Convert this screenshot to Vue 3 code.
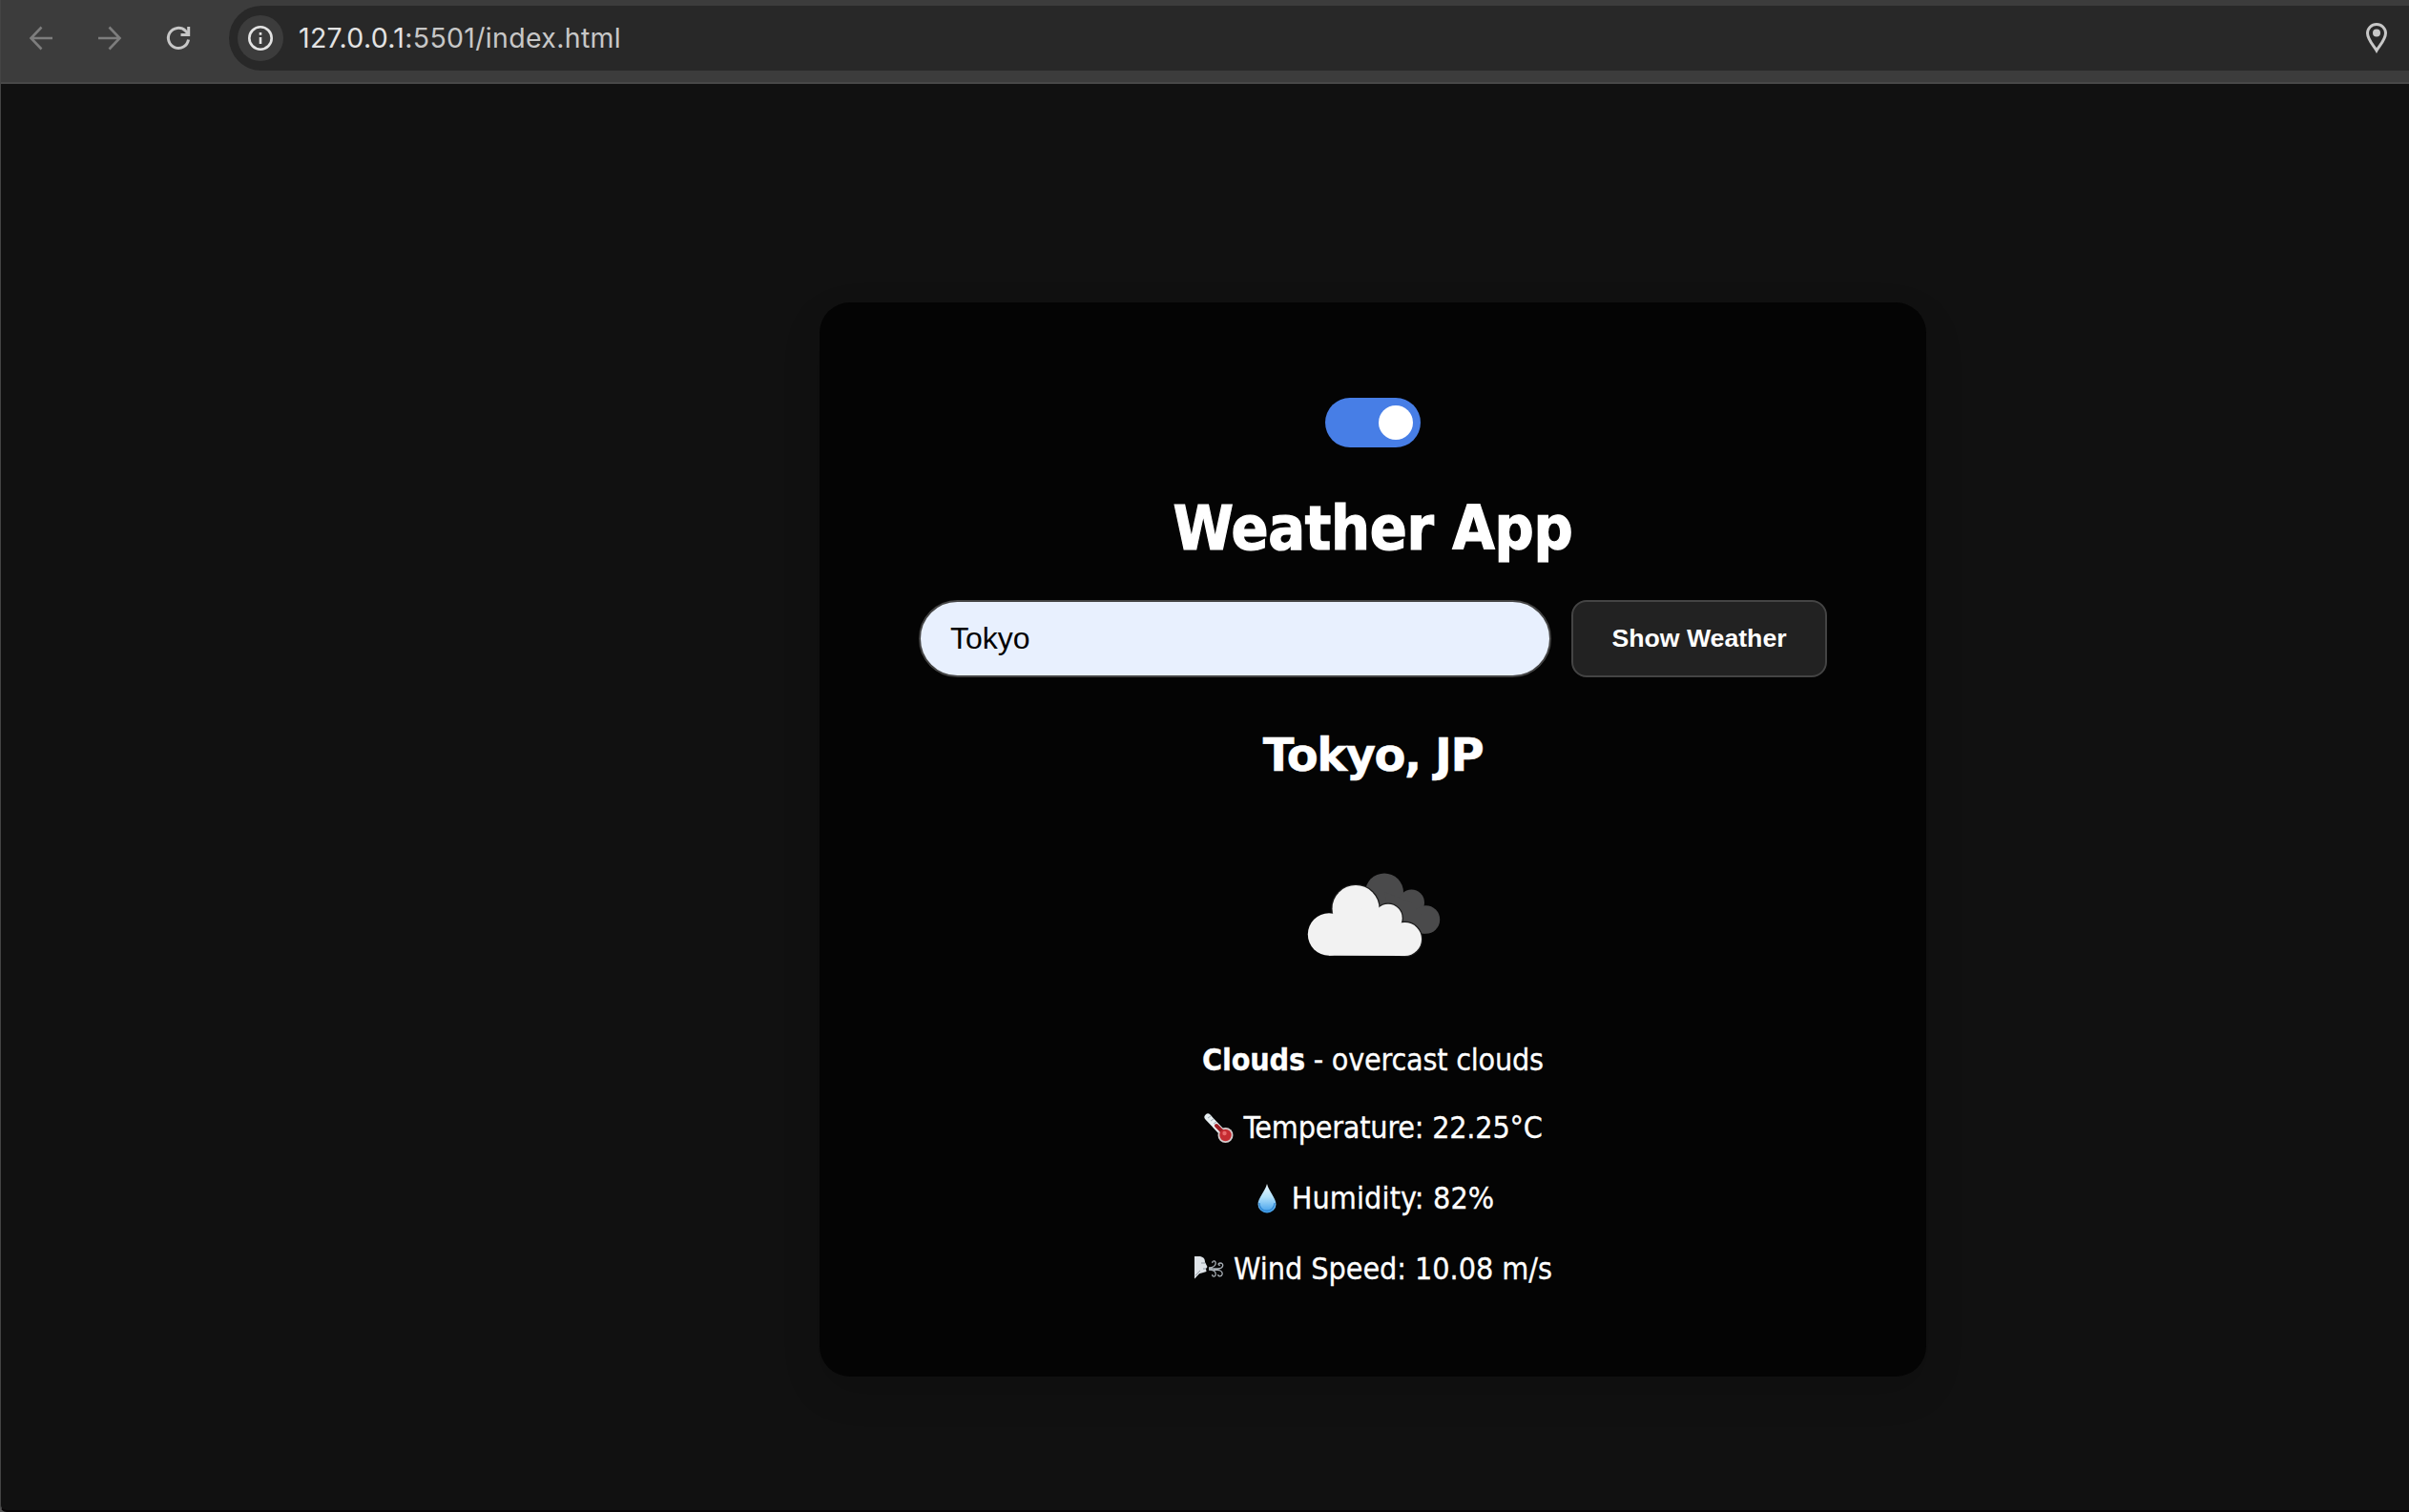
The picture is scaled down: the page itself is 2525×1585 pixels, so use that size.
<script setup>
import { ref } from 'vue'

const city = ref('Tokyo')
const dark = ref(true)
</script>

<template>
  <div class="window">
    <header class="toolbar">
      <svg class="nav dim" viewBox="0 0 32 40"><path d="M27 20H4.500M15.500 8.500L4.500 20l11 11.500" /></svg>
      <svg class="nav dim" viewBox="0 0 32 40"><path d="M3 20h22.500M14.500 8.500l11 11.500-11 11.500" /></svg>
      <svg class="nav reload" viewBox="0 0 32 40"><path d="M25.500 21.500A10.600 10.600 0 1 1 22.300 12.200L25.500 15.500" /><path d="M25.700 8V16.500H17.500" /></svg>
      <div class="omnibox">
        <span class="site-info">
          <svg viewBox="0 0 28 28"><circle cx="14" cy="14" r="11.7" /><path d="M14 13v7M14 8v2.8" /></svg>
        </span>
        <span class="url"><b>127.0.0.1</b>:5501/index.html</span>
        <svg class="pin" viewBox="0 0 24 34"><path d="M12 30C9 25 2.5 18.500 2.500 11.800A9.500 9.300 0 0 1 21.500 11.800C21.500 18.500 15 25 12 30Z" /><circle cx="12" cy="11.500" r="4" /></svg>
      </div>
    </header>
    <main class="page">
      <section class="card">
        <button class="switch" :class="{ on: dark }" @click="dark = !dark"><i></i></button>
        <h1><span>Weather App</span></h1>
        <form class="search" @submit.prevent>
          <input v-model="city" type="text" />
          <button>Show Weather</button>
        </form>
        <h2><span>Tokyo, JP</span></h2>
        <svg class="clouds" viewBox="20 14 140 90">
          <g class="back">
            <circle cx="101" cy="35.500" r="20" /><circle cx="129.500" cy="46" r="13.500" /><circle cx="144.500" cy="64" r="14.700" />
            <path d="M101 35L129 46 144 64V78.500H110Z" />
          </g>
          <g class="outline">
            <circle cx="71" cy="52.500" r="24.500" /><circle cx="105" cy="62.500" r="14.700" /><circle cx="122.500" cy="84.500" r="17.500" />
          </g>
          <g class="front">
            <circle cx="43" cy="79.500" r="22.200" /><circle cx="71" cy="52.500" r="24.500" /><circle cx="105" cy="62.500" r="14.700" /><circle cx="122.500" cy="84.500" r="17.500" />
            <path d="M43 101.700V70L71 50 105 62 122 84V102Z" />
          </g>
        </svg>
        <p class="line summary"><span><strong>Clouds</strong> - overcast clouds</span></p>
        <p class="line temperature">
          <svg class="emoji" viewBox="0 0 32 32">
            <path d="M5 5L20 21" stroke="#e8eff2" stroke-width="7" stroke-linecap="round" />
            <path d="M5 6l3-2M8 9l3-2M11 12l3-2" stroke="#9eabb2" stroke-width="1" />
            <circle cx="23.500" cy="24" r="8" fill="#d5cccd" />
            <path d="M14 14l10 10" stroke="#9f2026" stroke-width="4" stroke-linecap="round" />
            <circle cx="23.500" cy="24" r="6.200" fill="#c52c32" />
            <circle cx="22.500" cy="22" r="2.200" fill="#e9686b" />
          </svg><span>Temperature: 22.25°C</span>
        </p>
        <p class="line humidity">
          <svg class="emoji" viewBox="0 0 32 32">
            <defs><linearGradient id="drop" x2="0" y2="1"><stop offset="0" stop-color="#eef9ff" /><stop offset=".45" stop-color="#b2e1fa" /><stop offset="1" stop-color="#3d9deb" /></linearGradient></defs>
            <path d="M16 1C14 9 6.500 16 6.500 22.500a9.500 9 0 0 0 19 0C25.500 16 18 9 16 1Z" fill="url(#drop)" />
            <path d="M8 21c-.5 11 15.500 11 16 0" fill="none" stroke="#3187d2" stroke-width="1.300" />
          </svg><span>Humidity: 82%</span>
        </p>
        <p class="line wind">
          <svg class="emoji" viewBox="0 0 32 32">
            <path d="M1 3h6c4 1 5 3 5 6l2.500 5-1.500 2 .5 3-5 1.500c-3 0-4 3-7.500 6Z" fill="#dfe4e9" />
            <path d="M8 10l4 0M10 16l3 0M2 23c2-1 3-4 5-5" stroke="#8d969f" stroke-width="1" fill="none" />
            <path d="M16 16h9c7 0 7-6 3-6-3 0-2 3 0 2M16 15c5 0 8-3 7-6-1-2-4-1-3 1M16 17c5 0 8 2 7 6-1 2-4 1-3-1M21 17c6 0 10 1 9 5-1 3-5 2-4 0" stroke="#a8afb5" stroke-width="1.300" fill="none" />
          </svg><span>Wind Speed: 10.08 m/s</span>
        </p>
      </section>
    </main>
  </div>
</template>

<style>
body {
  background: #555;
}
</style>

<style scoped>
.window {
  box-sizing: border-box;
  width: 2525px;
  height: 1585px;
  display: flex;
  flex-direction: column;
  overflow: hidden;
  background: #111;
  border-left: 1px solid #444;
  border-bottom: 2px solid #080406;
  border-bottom-left-radius: 7px;
}
.toolbar {
  box-sizing: border-box;
  flex: none;
  height: 88px;
  padding: 6px 0 12px 27px;
  display: flex;
  align-items: center;
  background: #3c3c3c;
  border-bottom: 2px solid #484848;
}
.nav {
  width: 32px;
  height: 40px;
  margin-right: 40px;
  fill: none;
  stroke: #c7c7c7;
  stroke-width: 3;
}
.nav.dim {
  stroke: #7d7d7d;
  stroke-width: 2.6;
}
.nav.reload {
  margin-right: 36px;
}
.omnibox {
  flex: 1;
  height: 68px;
  display: flex;
  align-items: center;
  padding: 0 22px 0 9px;
  border-radius: 34px 0 0 34px;
  background: #282828;
}
.site-info {
  width: 48px;
  height: 48px;
  display: flex;
  align-items: center;
  justify-content: center;
  border-radius: 50%;
  background: #3c3c3c;
}
.site-info svg {
  width: 28px;
  height: 28px;
  fill: none;
  stroke: #e3e3e3;
  stroke-width: 2.6;
}
.url {
  flex: 1;
  padding: 0 0 2px 16px;
  font: 28.5px Inter, sans-serif;
  letter-spacing: 0.32px;
  color: #c7c7c7;
}
.url b {
  font-weight: 400;
  color: #e3e3e3;
}
.pin {
  width: 24px;
  height: 34px;
  fill: none;
  stroke: #c7c7c7;
  stroke-width: 3;
}
.pin circle {
  fill: #c7c7c7;
  stroke: none;
}
.page {
  flex: 1;
  display: flex;
  flex-direction: column;
  align-items: center;
  padding: 229px 0 0 352px;
}
.card {
  box-sizing: border-box;
  width: 1160px;
  height: 1126px;
  padding: 100px 104px 80px;
  display: flex;
  flex-direction: column;
  align-items: center;
  border-radius: 32px;
  background: #040404;
  box-shadow: 0 16px 40px rgba(0, 0, 0, 0.14);
  color: #fff;
  font-family: "DejaVu Sans Condensed", "DejaVu Sans", sans-serif;
  font-stretch: condensed;
}
.switch {
  box-sizing: border-box;
  width: 100px;
  height: 52px;
  padding: 8px;
  display: flex;
  border: 0;
  border-radius: 26px;
  background: #555;
}
.switch.on {
  justify-content: flex-end;
  background: #477ee6;
}
.switch i {
  width: 36px;
  height: 36px;
  border-radius: 50%;
  background: #fff;
}
h1,
h2,
p {
  margin: 0;
  white-space: nowrap;
}
h1 {
  margin-top: 45px;
  font-size: 64px;
  line-height: 80px;
  letter-spacing: -0.3px;
  -webkit-text-stroke: 1.2px #fff;
}
.search {
  margin-top: 35px;
  display: flex;
  gap: 21px;
}
.search input {
  box-sizing: border-box;
  width: 663px;
  height: 81px;
  padding: 0 31px;
  border: 2px solid #444;
  border-radius: 41px;
  outline: 0;
  background: #e8f0fe;
  color: #000;
  font: 32px "Liberation Sans", Arial, sans-serif;
}
.search button {
  box-sizing: border-box;
  width: 268px;
  height: 81px;
  padding: 0;
  border: 2px solid #444;
  border-radius: 16px;
  background: #222;
  color: #fff;
  font: bold 26.67px "Liberation Sans", Arial, sans-serif;
}
h2 {
  margin-top: 51px;
  font-family: "DejaVu Sans", sans-serif;
  font-stretch: normal;
  font-size: 48px;
  line-height: 60px;
  letter-spacing: -1.45px;
  -webkit-text-stroke: 0.5px #fff;
}
.clouds {
  flex: none;
  width: 140px;
  height: 90px;
  margin: 93px 0 0 2px;
}
.back {
  fill: #4a4a4b;
}
.outline {
  fill: none;
  stroke: #1c1c1c;
  stroke-width: 2.5;
}
.front {
  fill: #f2f2f2;
}
.line {
  flex: none;
  display: flex;
  align-items: center;
  height: 40px;
  font-size: 32px;
  line-height: 40px;
  letter-spacing: -0.22px;
  -webkit-text-stroke: 0.3px #fff;
}
.summary {
  margin-top: 87px;
}
.temperature {
  margin-top: 31px;
}
.humidity,
.wind {
  margin-top: 34px;
}
.humidity {
  letter-spacing: 0.12px;
}
.wind {
  letter-spacing: -0.04px;
}
.emoji {
  width: 32px;
  height: 32px;
  margin-right: 10px;
  fill: none;
}
</style>
